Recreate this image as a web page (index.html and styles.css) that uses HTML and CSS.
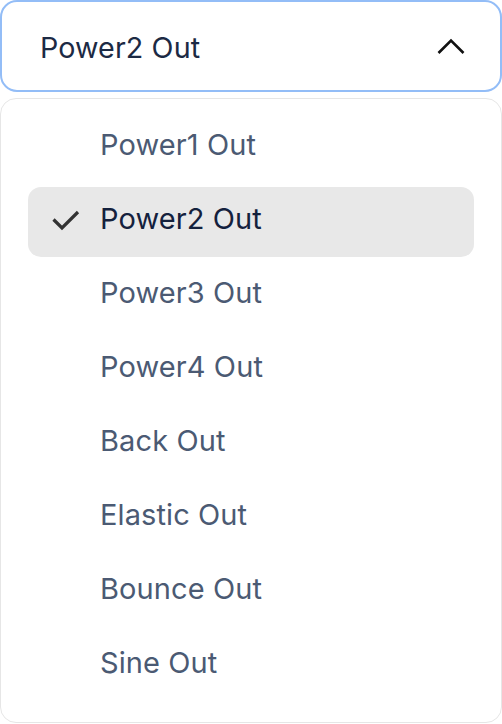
FILE: index.html
```html
<!DOCTYPE html>
<html>
<head>
<meta charset="utf-8">
<link rel="stylesheet" href="styles.css">
</head>
<body>
<div class="select">
  <div class="trigger">
    <span class="value">Power2 Out</span>
    <svg class="chevron" width="30" height="18" viewBox="0 0 30 18"><path d="M2.5 16 L15 3.5 L27.5 16" fill="none" stroke="#111" stroke-width="2.6"/></svg>
  </div>
  <ul class="menu">
    <li class="item"><span class="mark"></span><span class="label">Power1 Out</span></li>
    <li class="item selected"><span class="mark"><svg width="30" height="22" viewBox="0 0 30 22"><path d="M2.5 10.5 L11 19 L27 3" fill="none" stroke="#333" stroke-width="3.2"/></svg></span><span class="label">Power2 Out</span></li>
    <li class="item"><span class="mark"></span><span class="label">Power3 Out</span></li>
    <li class="item"><span class="mark"></span><span class="label">Power4 Out</span></li>
    <li class="item"><span class="mark"></span><span class="label">Back Out</span></li>
    <li class="item"><span class="mark"></span><span class="label">Elastic Out</span></li>
    <li class="item"><span class="mark"></span><span class="label">Bounce Out</span></li>
    <li class="item"><span class="mark"></span><span class="label">Sine Out</span></li>
  </ul>
</div>
</body>
</html>
```
FILE: styles.css
```css
html, body {
  margin: 0;
  padding: 0;
  background: #ffffff;
}
body {
  font-family: Inter, "Noto Sans", sans-serif;
  width: 502px;
  height: 724px;
  overflow: hidden;
}
.select {
  display: flex;
  flex-direction: column;
  gap: 6px;
  width: 502px;
}
.trigger {
  box-sizing: border-box;
  height: 92px;
  border: 2px solid #93bdf7;
  border-radius: 17px;
  display: flex;
  align-items: center;
  justify-content: space-between;
  padding: 2px 34px 0 38px;
}
.value {
  font-size: 28.7px;
  color: #1c2a44;
  letter-spacing: 0.1px;
}
.chevron {
  display: block;
  margin-top: -2px;
}
.menu {
  list-style: none;
  margin: 0;
  box-sizing: border-box;
  height: 625px;
  border: 1px solid #e6e6e6;
  border-radius: 16px;
  padding: 14px 27px 0 27px;
  display: flex;
  flex-direction: column;
  gap: 4px;
}
.item {
  box-sizing: border-box;
  height: 70px;
  display: flex;
  align-items: center;
  padding: 0 0 8px 23px;
  border-radius: 13px;
  font-size: 29px;
  color: #4b5a73;
  letter-spacing: 0.1px;
}
.item.selected {
  background: #e8e8e8;
  color: #14213d;
}
.mark {
  width: 49px;
  flex: none;
  display: flex;
  align-items: center;
  padding-top: 3px;
}
.mark svg {
  display: block;
}
```
